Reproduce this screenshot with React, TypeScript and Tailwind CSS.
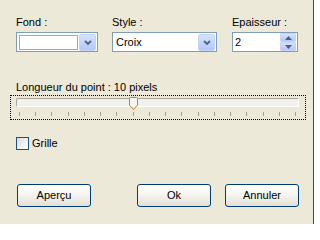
import React from "react";

const ticks = Array.from({ length: 18 }, (_, i) => i);

function DropButton() {
  return (
    <div className="w-[17px] h-[17px] rounded-[2px] bg-gradient-to-b from-[#d6e2fd] to-[#b4c8f7] border border-[#c4d4f8] flex items-center justify-center">
      <svg width="8" height="5" viewBox="0 0 8 5">
        <path d="M1 1l3 3l3-3" fill="none" stroke="#4d6185" strokeWidth="1.8" />
      </svg>
    </div>
  );
}

function SpinHalf({ up }: { up?: boolean }) {
  return (
    <div className="w-[16px] h-[9px] rounded-[1px] bg-gradient-to-b from-[#d6e2fd] to-[#b4c8f7] border border-[#c4d4f8] flex items-center justify-center">
      <svg width="7" height="4" viewBox="0 0 7 4">
        <path d={up ? "M0 4h7L3.5 0z" : "M0 0h7L3.5 4z"} fill="#4d6185" />
      </svg>
    </div>
  );
}

function XpButton({ label, className }: { label: string; className?: string }) {
  return (
    <div
      className={
        "w-[74px] h-[23px] rounded-[3px] border border-[#003c74] bg-gradient-to-b from-[#ffffff] via-[#f4f3ee] to-[#e3e0d5] flex items-center justify-center text-black " +
        (className ?? "")
      }
    >
      {label}
    </div>
  );
}

export default function App() {
  return (
    <div
      className="w-[314px] h-[224px] bg-[#ece9d8] border-r border-[#1648d6] text-[11px] leading-[13px] text-black overflow-hidden"
      style={{ fontFamily: '"Liberation Sans", Arial, sans-serif' }}
    >
      <div className="pl-[16px] pt-[16px]">
        <div className="flex">
          <div className="w-[82px] flex flex-col">
            <span className="mb-[3px]">Fond :</span>
            <div className="h-[20px] border border-[#7f9db9] bg-white flex items-center pl-[2px] pr-[1px]">
              <div className="flex-1 h-[15px] border border-[#aca899] bg-white mr-[1px]" />
              <DropButton />
            </div>
          </div>
          <div className="w-[105px] ml-[14px] flex flex-col">
            <span className="mb-[3px]">Style :</span>
            <div className="h-[20px] border border-[#7f9db9] bg-white flex items-center pl-[3px] pr-[1px]">
              <span className="flex-1">Croix</span>
              <DropButton />
            </div>
          </div>
          <div className="w-[66px] ml-[15px] flex flex-col">
            <span className="mb-[3px]">Epaisseur :</span>
            <div className="h-[20px] border border-[#7f9db9] bg-white flex items-center pl-[2px] pr-[1px]">
              <span className="flex-1">2</span>
              <div className="flex flex-col">
                <SpinHalf up />
                <SpinHalf />
              </div>
            </div>
          </div>
        </div>

        <div className="mt-[29px]">Longueur du point : 10 pixels</div>
        <div className="ml-[-6px] mt-[1px] w-[296px] h-[25px] border border-dotted border-black pt-[2px] pl-[5px]">
          <div className="relative w-[283px] h-[9px] rounded-[2px] border border-[#a8a59b] border-b-white border-r-white bg-[#f2f1eb]">
            <svg
              className="absolute top-[-2px] left-[112px]"
              width="9"
              height="13"
              viewBox="0 0 9 13"
            >
              <path d="M0.5 1.5a1 1 0 0 1 1-1h6a1 1 0 0 1 1 1v7l-4 4l-4-4z" fill="#f6f5f0" stroke="#8b8b86" />
              <path d="M1 8.5l3.5 3.5l3.5-3.5" fill="none" stroke="#f5b33a" />
            </svg>
          </div>
          <div className="flex justify-between w-[277px] ml-[3px] mt-[5px]">
            {ticks.map((t) => (
              <div key={t} className="w-[1px] h-[4px] bg-[#a0a0a0]" />
            ))}
          </div>
        </div>

        <div className="flex items-center mt-[17px]">
          <div className="w-[13px] h-[13px] border border-[#1c5180] bg-gradient-to-br from-[#dcdcd7] to-[#ffffff]" />
          <span className="ml-[3px]">Grille</span>
        </div>

        <div className="flex mt-[34px] ml-[1px]">
          <XpButton label="Aperçu" />
          <XpButton label="Ok" className="ml-[46px]" />
          <XpButton label="Annuler" className="ml-[14px]" />
        </div>
      </div>
    </div>
  );
}
